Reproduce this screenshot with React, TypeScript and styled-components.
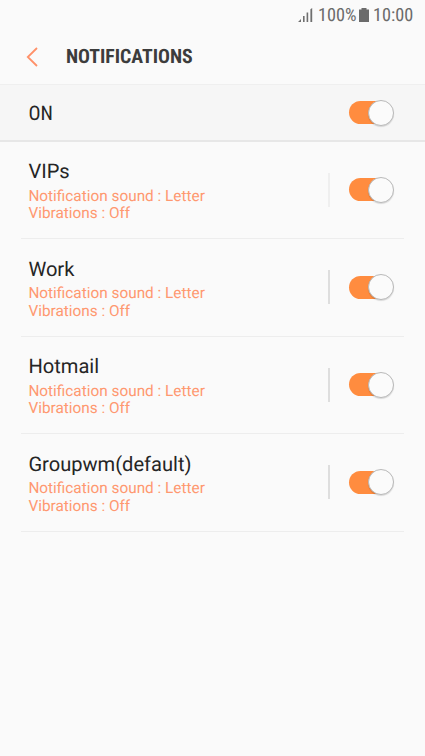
import React from 'react';
import styled, { createGlobalStyle } from 'styled-components';

const Global = createGlobalStyle`
  * { box-sizing: border-box; }
  body {
    margin: 0;
    background: #fafafa;
    font-family: Roboto, "Liberation Sans", sans-serif;
    text-rendering: geometricPrecision;
  }
`;

const Screen = styled.main`
  width: 425px;
  height: 756px;
  background: #fafafa;
  overflow: hidden;
`;

const StatusBar = styled.div`
  height: 29px;
  padding-right: 13px;
  display: flex;
  align-items: center;
  justify-content: flex-end;
  color: #6b6b6b;
  font: 400 18.2px/29px "Roboto Condensed", Roboto, sans-serif;
`;

const Signal = styled.svg`
  width: 15px;
  height: 14px;
  margin-right: 5px;
`;

const Battery = styled.svg`
  width: 10px;
  height: 14px;
  margin: 0 4px 0 3px;
`;

const StatusText = styled.span<{ $width: number }>`
  width: ${(p) => p.$width}px;
  padding-top: 2px;
  white-space: nowrap;
`;

const Header = styled.header`
  height: 55px;
  padding-left: 26px;
  display: flex;
  align-items: center;
`;

const BackButton = styled.button`
  width: 40px;
  height: 24px;
  padding: 0;
  border: 0;
  background: none;
  display: flex;
  align-items: center;
`;

const Title = styled.h1`
  margin: 0;
  font: 700 19.8px/24px "Roboto Condensed", Roboto, sans-serif;
  color: #3c3c3c;
`;

const MasterRow = styled.section`
  height: 58px;
  padding: 0 31px 0 28px;
  display: flex;
  align-items: center;
  justify-content: space-between;
  background: #f6f6f6;
  border-top: 1px solid #efefef;
  border-bottom: 2px solid #e7e7e7;
`;

const MasterLabel = styled.span`
  padding: 1px 0 0 0.5px;
  font: 400 20px/26px "Roboto Condensed", Roboto, sans-serif;
  color: #252525;
`;

const List = styled.ul`
  list-style: none;
  margin: -0.3px 0 0;
  padding: 0 21px;
`;

const Item = styled.li`
  height: 97.5px;
  padding: 0 10px 0 7px;
  display: flex;
  align-items: center;
  border-bottom: 1px solid #ededed;
`;

const Info = styled.div`
  flex: 1;
  padding: 1px 0 0 0.4px;
`;

const Name = styled.div`
  margin-bottom: 3.3px;
  font-size: 20.1px;
  line-height: 26px;
  color: #252525;
`;

const Detail = styled.div`
  font-size: 15.35px;
  line-height: 17.5px;
  color: #ff9870;
`;

const Divider = styled.div<{ $soft: boolean }>`
  width: 2px;
  height: 34px;
  background: ${(p) => (p.$soft ? '#efefef' : '#dedede')};
  margin-right: 19px;
`;

const Track = styled.button`
  width: 45px;
  height: 26px;
  padding: 0;
  border: 0;
  background: none;
  display: grid;
  align-items: center;

  &::before {
    content: "";
    grid-area: 1 / 1;
    width: 40px;
    height: 23px;
    border-radius: 12px;
    background: #ff8c3f;
  }
`;

const Thumb = styled.span`
  grid-area: 1 / 1;
  justify-self: end;
  width: 26px;
  height: 26px;
  border-radius: 50%;
  background: #fbfbfb;
  border: 1px solid #b9b9b9;
  box-shadow: 0 1px 1px rgba(0, 0, 0, 0.13);
`;

const Switch = ({ label }: { label: string }) => (
  <Track role="switch" aria-checked="true" aria-label={label}><Thumb /></Track>
);

const groups = ['VIPs', 'Work', 'Hotmail', 'Groupwm(default)'];

export default function App() {
  return (
    <Screen>
      <Global />
      <StatusBar>
        <Signal viewBox="0 0 15 14" fill="#6f6f6f">
          <path d="M0 14L3 11v3zM5 8h1.6v6H5zM8.6 4.5h1.6V14H8.6zM12.4 1.2L14.2 0v14h-1.8z" />
        </Signal>
        <StatusText $width={38}>100%</StatusText>
        <Battery viewBox="0 0 10 14" fill="#6b6b6b"><path d="M2.5 0h5v1.5H10V14H0V1.5h2.5z" /></Battery>
        <StatusText $width={39}>10:00</StatusText>
      </StatusBar>
      <Header>
        <BackButton aria-label="Back">
          <svg width="13" height="20" viewBox="0 0 13 20" fill="none" stroke="#ff9169" strokeWidth="1.8"><path d="M11 1L1.8 10l9.2 9" /></svg>
        </BackButton>
        <Title>NOTIFICATIONS</Title>
      </Header>
      <MasterRow><MasterLabel>ON</MasterLabel><Switch label="Notifications" /></MasterRow>
      <List>
        {groups.map((name, index) => (
          <Item key={name}>
            <Info>
              <Name>{name}</Name>
              <Detail>Notification sound : Letter</Detail>
              <Detail>Vibrations : Off</Detail>
            </Info>
            <Divider $soft={index === 0} />
            <Switch label={name} />
          </Item>
        ))}
      </List>
    </Screen>
  );
}
